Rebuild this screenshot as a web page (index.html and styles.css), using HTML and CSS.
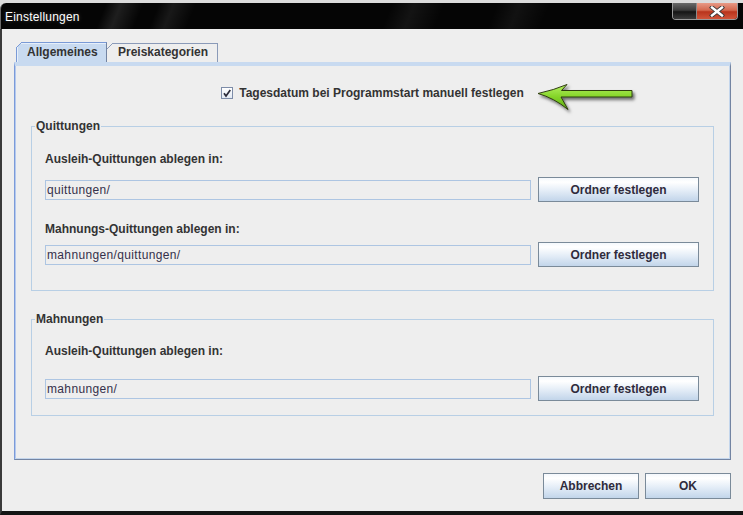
FILE: index.html
```html
<!DOCTYPE html>
<html lang="de">
<head>
<meta charset="utf-8">
<title>Einstellungen</title>
<link rel="stylesheet" href="styles.css">
</head>
<body>
<div class="window">
  <div class="titlebar">
    <span class="title">Einstellungen</span>
    <div class="caption">
      <span class="cap-min"></span>
      <span class="cap-close">
        <svg width="16" height="11" viewBox="0 0 16 11"><path d="M3 1.5 L13 9.5 M13 1.5 L3 9.5" stroke="#3a3a3a" stroke-width="4.2" stroke-linecap="square"/><path d="M3 1.5 L13 9.5 M13 1.5 L3 9.5" stroke="#ffffff" stroke-width="2.4" stroke-linecap="square"/></svg>
      </span>
    </div>
  </div>
  <div class="client">
    <div class="tabs">
      <div class="tab tab-active">Allgemeines</div>
      <div class="tab tab-other">Preiskategorien</div>
    </div>
    <div class="panel">
      <div class="check-row">
        <span class="checkbox">
          <svg width="10" height="10" viewBox="0 0 10 10"><path d="M2 5.2 L4 8 L8.3 2" fill="none" stroke="#2b2b3a" stroke-width="1.7"/></svg>
        </span>
        <span>Tagesdatum bei Programmstart manuell festlegen</span>
      </div>
      <svg class="arrow" width="108" height="40" viewBox="0 0 108 40">
        <defs>
          <linearGradient id="ag" x1="0" y1="0" x2="0" y2="1">
            <stop offset="0" stop-color="#b4f060"/>
            <stop offset="0.5" stop-color="#84d428"/>
            <stop offset="1" stop-color="#5fae14"/>
          </linearGradient>
          <filter id="sh" x="-10%" y="-20%" width="130%" height="160%">
            <feDropShadow dx="2" dy="2.5" stdDeviation="1.4" flood-color="#000" flood-opacity="0.55"/>
          </filter>
        </defs>
        <path d="M4 15.5 Q20 12 33 6.5 L27.5 12.5 L98 12.5 L98 19 L27 19 L34 31.5 Q20 20 4 15.5 Z" fill="url(#ag)" stroke="#2f3d10" stroke-width="1" stroke-linejoin="round" filter="url(#sh)"/>
      </svg>
      <fieldset class="group group-first">
        <legend>Quittungen</legend>
        <div class="group-body body-first">
          <div class="lbl">Ausleih-Quittungen ablegen in:</div>
          <div class="row row-a">
            <div class="field">quittungen/</div>
            <button class="btn btn-folder">Ordner festlegen</button>
          </div>
          <div class="lbl lbl-b">Mahnungs-Quittungen ablegen in:</div>
          <div class="row row-b">
            <div class="field">mahnungen/quittungen/</div>
            <button class="btn btn-folder">Ordner festlegen</button>
          </div>
        </div>
      </fieldset>
      <fieldset class="group group-second">
        <legend>Mahnungen</legend>
        <div class="group-body body-second">
          <div class="lbl">Ausleih-Quittungen ablegen in:</div>
          <div class="row row-c">
            <div class="field">mahnungen/</div>
            <button class="btn btn-folder">Ordner festlegen</button>
          </div>
        </div>
      </fieldset>
    </div>
    <div class="actions">
      <button class="btn btn-cancel">Abbrechen</button>
      <button class="btn btn-ok">OK</button>
    </div>
  </div>
</div>
</body>
</html>
```
FILE: styles.css
```css
* { box-sizing: border-box; }
html, body { margin: 0; padding: 0; }
body {
  width: 743px;
  height: 515px;
  overflow: hidden;
  background: #dcdcdc;
  font-family: "Liberation Sans", Arial, sans-serif;
  font-size: 12px;
  color: #333333;
}
.window {
  display: flex;
  flex-direction: column;
  height: 515px;
}
.titlebar {
  flex: none;
  margin-top: 3px;
  height: 26px;
  display: flex;
  align-items: flex-start;
  border-top-left-radius: 6px;
  border-left: 1px solid #6a6a6a;
  background:
    linear-gradient(112deg, transparent 0 14%, rgba(255,255,255,0.10) 16%, transparent 19%, transparent 21%, rgba(255,255,255,0.08) 23%, transparent 26%),
    linear-gradient(112deg, transparent 0 52%, rgba(255,255,255,0.06) 55%, transparent 59%, transparent 66%, rgba(255,255,255,0.05) 69%, transparent 73%),
    #050505;
}
.title {
  color: #ffffff;
  font-size: 12px;
  line-height: 14px;
  margin: 7px 0 0 4px;
  letter-spacing: 0.2px;
  text-shadow: 0 0 4px rgba(255,255,255,0.25);
}
.caption {
  margin-left: auto;
  margin-right: 5px;
  display: flex;
  height: 17px;
  border: 1px solid #9a9a9a;
  border-top: none;
  border-radius: 0 0 4px 4px;
  overflow: hidden;
}
.cap-min {
  width: 24px;
  background: linear-gradient(#6a6a6a, #3a3a3a 45%, #151515 55%, #3c3c3c);
  border-right: 1px solid #8a8a8a;
}
.cap-close {
  width: 40px;
  display: flex;
  align-items: center;
  justify-content: center;
  background: linear-gradient(#e79a86, #d4684e 45%, #b9341c 55%, #d0553a);
}
.client {
  flex: 1;
  display: flex;
  flex-direction: column;
  background: #eeeeee;
  border-left: 2px solid #3a3a3a;
  border-bottom: 4px solid #141414;
  padding: 13px 12px 12px 12px;
}
.tabs {
  display: flex;
  align-items: flex-end;
  height: 20px;
  margin-left: 2px;
}
.tab {
  position: relative;
  font-weight: bold;
  color: #333333;
  border-top: 1px solid #8a9ab8;
  border-right: 1px solid #8a9ab8;
}
.tab-active {
  width: 91px;
  height: 20px;
  line-height: 18px;
  padding-left: 10px;
  background: #c8daf0;
  border-top-color: #7a9ad6;
  border-left: 1px solid #7a9ad6;
  border-right-color: #7384a2;
  box-shadow: inset 1px 1px 0 #e6effa;
}
.tab-active::before {
  content: "";
  position: absolute;
  left: -1px;
  top: -1px;
  width: 6px;
  height: 6px;
  background: linear-gradient(to bottom right, #eeeeee 0 calc(50% - 0.6px), #7a9ad6 calc(50% - 0.6px) calc(50% + 0.6px), transparent calc(50% + 0.6px));
}
.tab-other {
  width: 111px;
  height: 19px;
  line-height: 17px;
  padding-left: 11px;
  background: #eeeeee;
}
.tab-other::before {
  content: "";
  position: absolute;
  left: 0;
  top: -1px;
  width: 6px;
  height: 6px;
  background: linear-gradient(to bottom right, #eeeeee 0 calc(50% - 0.6px), #8a9ab8 calc(50% - 0.6px) calc(50% + 0.6px), transparent calc(50% + 0.6px));
}
.panel {
  position: relative;
  flex: none;
  height: 398px;
  display: flex;
  flex-direction: column;
  border-top: 4px solid #c8daf0;
  border-left: 1px solid #7b9ad8;
  border-right: 1px solid #7384a2;
  border-bottom: 1px solid #7384a2;
  box-shadow: inset -1px -1px 0 #c4d6ec, inset 1px 0 0 #b4c9ee;
}
.check-row {
  margin-top: 20px;
  height: 14px;
  display: flex;
  align-items: center;
  justify-content: center;
  gap: 6px;
  font-weight: bold;
  line-height: 14px;
}
.checkbox {
  width: 12px;
  height: 12px;
  display: flex;
  align-items: center;
  justify-content: center;
  border: 1px solid #7d8ca8;
  background: linear-gradient(#ffffff, #e2e9f3);
}
.arrow {
  position: absolute;
  left: 519px;
  top: 12px;
}
.group {
  margin: 19px 16px 0 16px;
  padding: 0;
  border: 1px solid #b8cfe5;
  min-width: 0;
}
.group legend {
  margin-left: 3px;
  padding: 0 1px;
  font-weight: bold;
  line-height: 14px;
}
.group-second {
  margin-top: 21px;
}
.group-body {
  padding: 19px 14px 23px 13px;
}
.body-second {
  padding-top: 18px;
  padding-bottom: 14px;
}
.lbl {
  font-weight: bold;
  line-height: 14px;
}
.lbl-b {
  margin-top: 20px;
}
.row {
  display: flex;
  height: 25px;
  margin-top: 11px;
}
.row-b { margin-top: 6px; }
.row-c { margin-top: 18px; }
.field {
  flex: 1;
  height: 20px;
  margin-top: 3px;
  margin-right: 7px;
  border: 1px solid #adc5e2;
  padding-left: 1px;
  line-height: 19px;
  color: #35304a;
  letter-spacing: 0.35px;
  white-space: nowrap;
}
.btn {
  font-family: "Liberation Sans", Arial, sans-serif;
  font-size: 12px;
  font-weight: bold;
  color: #2f2b3c;
  border: 1px solid #7a8a99;
  border-radius: 0;
  padding: 0;
  background: linear-gradient(#f4f8fc 0%, #ffffff 18%, #e4edf7 55%, #c2d5ea 100%);
}
.btn-folder {
  width: 161px;
  height: 25px;
  padding-top: 1px;
}
.actions {
  display: flex;
  justify-content: flex-end;
  gap: 6px;
  margin-top: 13px;
}
.btn-cancel { width: 96px; height: 26px; }
.btn-ok { width: 86px; height: 26px; }
```
